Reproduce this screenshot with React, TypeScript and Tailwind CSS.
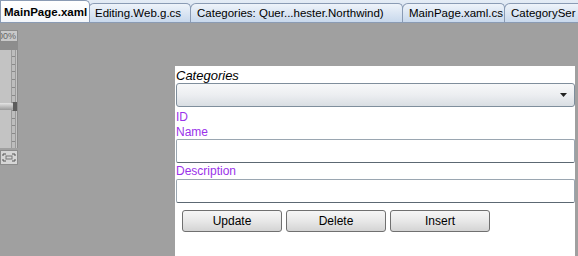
import React from 'react';

const tabs = [
  { label: 'MainPage.xaml', w: 'w-[90px]', active: true },
  { label: 'Editing.Web.g.cs', w: 'w-[103px]', active: false },
  { label: 'Categories: Quer...hester.Northwind)', w: 'w-[213px]', active: false },
  { label: 'MainPage.xaml.cs', w: 'w-[103px]', active: false },
  { label: 'CategorySer', w: 'w-[90px]', active: false },
];

const Tab: React.FC<{ label: string; w: string; active: boolean }> = ({ label, w, active }) => (
  <div
    className={
      active
        ? `${w} shrink-0 h-[22px] -mr-[2px] z-10 rounded-tr-[5px] border border-b-0 border-[#8a9bb4] bg-gradient-to-b from-white to-[#f3f6fa] pl-[3px] font-bold text-[11.5px] leading-[22px] text-black whitespace-nowrap overflow-hidden`
        : `${w} shrink-0 h-[19px] -mr-[1px] rounded-tr-[5px] rounded-tl-[6px] border border-b-0 border-[#8a9bb4] bg-gradient-to-b from-[#eef3fa] to-[#c8d8ec] pl-[6px] text-[11.5px] leading-[18px] text-black whitespace-nowrap overflow-hidden`
    }
  >
    {label}
  </div>
);

const Button: React.FC<{ label: string }> = ({ label }) => (
  <div className="w-[100px] h-[22px] rounded-[3px] border border-[#707070] bg-gradient-to-b from-[#f6f6f6] via-[#e8e8e8] to-[#d4d4d4] flex items-center justify-center text-[12px] text-black">
    {label}
  </div>
);

const ZoomControl: React.FC = () => (
  <div className="w-[18px] mt-[7px] flex flex-col">
    <div className="h-[12px] border border-[#8c8c8c] bg-[#c9c9c9] overflow-hidden flex justify-end items-center pr-[1px] text-[9px] leading-none text-[#666]">
      100%
    </div>
    <div className="h-[8px] bg-[#8d8d8d]" />
    <div className="relative h-[98px] bg-[#c3c3c3] border-r border-[#8c8c8c]">
      <div className="absolute left-[11px] top-0 bottom-0 w-[5px] border-x border-[#9a9a9a] bg-[#bdbdbd] flex flex-col justify-between py-[6px]">
        {Array.from({ length: 12 }).map((_, i) => (
          <div key={i} className="h-px w-[3px] bg-[#8a8a8a]" />
        ))}
      </div>
      <div className="absolute left-0 top-[53px] w-[14px] h-[7px] rounded-r-[4px] bg-gradient-to-b from-[#e4e4e4] to-[#9a9a9a]" />
      <div className="absolute left-[13px] top-[52px] w-[4px] h-[9px] bg-[#5c5c5c]" />
    </div>
    <div className="h-[2px]" />
    <div className="h-[15px] bg-[#d6d6d6] border border-[#8c8c8c] flex items-center justify-center">
      <svg width="14" height="9" viewBox="0 0 14 9">
        <path d="M1 1h3M1 1v2M13 1h-3M13 1v2M1 8h3M1 8V6M13 8h-3M13 8V6" stroke="#555" strokeWidth="1" fill="none" />
        <rect x="4" y="3" width="6" height="3" fill="none" stroke="#777" />
      </svg>
    </div>
  </div>
);

export default function App() {
  return (
    <div className="w-[578px] h-[256px] overflow-hidden flex flex-col bg-[#a0a0a0]" style={{ fontFamily: '"Liberation Sans", Arial, sans-serif' }}>
      <div className="h-[23px] shrink-0 flex items-end bg-gradient-to-b from-[#e4ecf6] to-[#cfdcec] border-b border-[#8a9bb4]">
        {tabs.map(t => (
          <Tab key={t.label} {...t} />
        ))}
      </div>
      <div className="flex-1 flex min-h-0">
        <ZoomControl />
        <div className="ml-[157px] mt-[43px] w-[400px] bg-white flex flex-col pl-[1px] pt-[2px]">
          <div className="italic text-[13px] leading-[15px] text-black">Categories</div>
          <div className="h-[24px] rounded-[3px] border border-[#7f8e9c] bg-gradient-to-b from-[#f7f8f9] via-[#eceef1] to-[#d9dee3] flex items-center justify-end pr-[7px]">
            <svg width="7" height="4" viewBox="0 0 7 4">
              <path d="M0 0h7L3.5 4z" fill="#222" />
            </svg>
          </div>
          <div className="mt-[3px] text-[12px] leading-[14px] text-[#9a32ea]">ID</div>
          <div className="mt-[1px] text-[12px] leading-[14px] text-[#9a32ea]">Name</div>
          <div className="h-[24px] border border-[#9aa6b1] border-b-[#5c6873] rounded-[2px]" />
          <div className="mt-[1px] text-[12px] leading-[14px] text-[#9a32ea]">Description</div>
          <div className="mt-[1px] h-[24px] border border-[#9aa6b1] border-b-[#5c6873] rounded-[2px]" />
          <div className="mt-[7px] ml-[6px] flex gap-[4px]">
            <Button label="Update" />
            <Button label="Delete" />
            <Button label="Insert" />
          </div>
        </div>
      </div>
    </div>
  );
}
